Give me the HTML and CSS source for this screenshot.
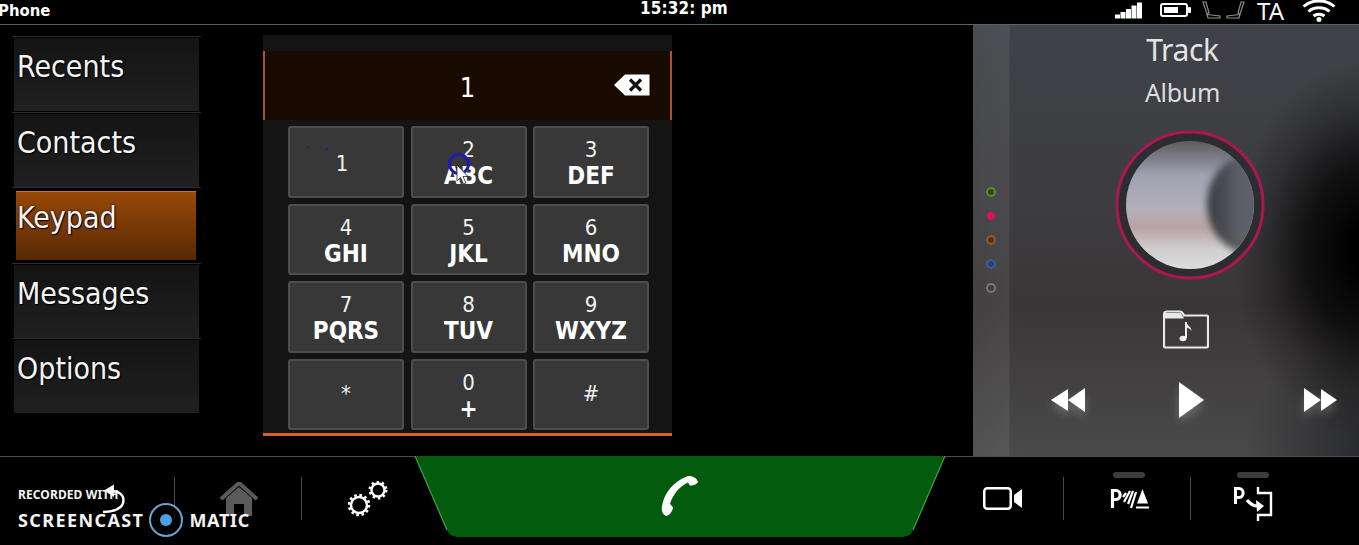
FILE: index.html
```html
<!DOCTYPE html>
<html lang="en">
<head>
<meta charset="utf-8">
<title>Phone</title>
<link rel="stylesheet" href="styles.css">
</head>
<body>
<div class="screen">
  <header class="topbar">
    <div class="app-name">Phone</div>
    <div class="clock">15:32: pm</div>
    <div class="status">
      <svg class="i-signal" width="27" height="17" viewBox="0 0 27 17"><g fill="#fff"><rect x="0" y="12.500" width="5" height="4"/><rect x="5.500" y="10" width="5" height="6.500"/><rect x="11" y="7" width="5" height="9.500"/><rect x="16.500" y="3.500" width="5" height="13"/><rect x="22" y="0.500" width="5" height="16"/></g></svg>
      <svg class="i-batt" width="31" height="14" viewBox="0 0 31 14"><rect x="1" y="1" width="26" height="12" rx="2" fill="none" stroke="#fff" stroke-width="2"/><rect x="4" y="4" width="14" height="6" fill="#fff"/><rect x="28" y="4" width="3" height="6" rx="1" fill="#fff"/></svg>
      <svg class="i-seats" width="43" height="18" viewBox="0 0 43 18"><g fill="none" stroke="#8d8d85" stroke-width="1.200"><path d="M1 1l3 0 3 11 -2 1z"/><path d="M5 13.500l13 1.500 0 2 -12 0z"/><path d="M42 1l-3 0 -3 11 2 1z"/><path d="M38 13.500l-13 1.500 0 2 12 0z"/></g></svg>
      <span class="ta">TA</span>
      <svg class="i-wifi" width="34" height="22" viewBox="0 0 34 22"><g fill="none" stroke="#fff" stroke-width="3"><path d="M1.500 6.500C10 -1 24 -1 32.500 6.500"/><path d="M6.500 11.500C12 6.500 22 6.500 27.500 11.500"/><path d="M11.500 16C14.500 13.500 19.500 13.500 22.500 16"/></g><circle cx="17" cy="19.500" r="2.500" fill="#fff"/></svg>
    </div>
  </header>

  <main class="main">
    <nav class="nav">
      <div class="nav-row"><div class="nav-item">Recents</div></div>
      <div class="nav-row"><div class="nav-item">Contacts</div></div>
      <div class="nav-row"><div class="nav-item nav-active">Keypad</div></div>
      <div class="nav-row"><div class="nav-item">Messages</div></div>
      <div class="nav-row"><div class="nav-item">Options</div></div>
    </nav>

    <section class="dialer">
      <div class="display">
        <span class="number">1</span>
        <svg class="i-del" width="36" height="22" viewBox="0 0 36 22"><path d="M0 11L11 0.500H35.500V21.500H11Z" fill="#fff"/><path d="M16 5.500L27 16.500M27 5.500L16 16.500" stroke="#111" stroke-width="3.200" fill="none"/></svg>
      </div>
      <div class="keys">
        <div class="key key-single key-one"><span class="digit">1</span><i class="spot spot-a"></i><i class="spot spot-b"></i></div>
        <div class="key"><span class="digit">2</span><span class="letters">ABC</span>
          <svg class="pointer" width="24" height="34" viewBox="0 0 24 34"><circle cx="11" cy="11" r="9.500" fill="none" stroke="#1c1cb4" stroke-width="3"/><path d="M9 12V28L12.500 24.500L15.500 31L18 30L15 23.500H20Z" fill="#fff" stroke="#222" stroke-width="0.800"/></svg>
        </div>
        <div class="key"><span class="digit">3</span><span class="letters">DEF</span></div>
        <div class="key"><span class="digit">4</span><span class="letters">GHI</span></div>
        <div class="key"><span class="digit">5</span><span class="letters">JKL</span></div>
        <div class="key"><span class="digit">6</span><span class="letters">MNO</span></div>
        <div class="key"><span class="digit">7</span><span class="letters">PQRS</span></div>
        <div class="key"><span class="digit">8</span><span class="letters">TUV</span></div>
        <div class="key"><span class="digit">9</span><span class="letters">WXYZ</span></div>
        <div class="key key-single"><span class="digit">*</span></div>
        <div class="key"><span class="digit">0</span><span class="letters">+</span></div>
        <div class="key key-single"><span class="digit">#</span></div>
      </div>
    </section>

    <aside class="media">
      <div class="sources">
        <i class="src src-green"></i>
        <i class="src src-red"></i>
        <i class="src src-orange"></i>
        <i class="src src-blue"></i>
        <i class="src src-grey"></i>
      </div>
      <div class="track">Track</div>
      <div class="album">Album</div>
      <svg class="art" width="152" height="152" viewBox="0 0 152 152">
        <defs>
          <clipPath id="artclip"><circle cx="75" cy="75" r="64"/></clipPath>
          <linearGradient id="artbg" x1="0" y1="0" x2="0" y2="1">
            <stop offset="0.08" stop-color="#5f5d63"/>
            <stop offset="0.3" stop-color="#a0a2b3"/>
            <stop offset="0.52" stop-color="#b2b0b8"/>
            <stop offset="0.64" stop-color="#b9a3a4"/>
            <stop offset="0.78" stop-color="#cfcdce"/>
            <stop offset="0.92" stop-color="#dedede"/>
          </linearGradient>
          <linearGradient id="artshade" x1="0" y1="0" x2="1" y2="0">
            <stop offset="0" stop-color="#35383d"/>
            <stop offset="0.35" stop-color="#5a5d64"/>
            <stop offset="1" stop-color="#6a6d73"/>
          </linearGradient>
          <filter id="soft"><feGaussianBlur stdDeviation="3.500"/></filter>
        </defs>
        <circle cx="75" cy="75" r="73" fill="#2b2d31" stroke="#ad1750" stroke-width="3"/>
        <g clip-path="url(#artclip)">
          <rect width="152" height="152" fill="url(#artbg)"/>
          <ellipse cx="136" cy="74" rx="44" ry="50" fill="url(#artshade)" filter="url(#soft)"/>
        </g>
      </svg>
      <svg class="folder" width="46" height="39" viewBox="0 0 46 39"><path d="M1 5C1 2 2 1.500 4 1.500H17C19 1.500 20 3 21 5.500H44C44.500 5.500 45 6 45 7V36C45 37 44.500 37.500 43.500 37.500H2.500C1.500 37.500 1 37 1 36Z" fill="none" stroke="#e8e8e8" stroke-width="2.200"/><path d="M1 3H18L21 8.500H1Z" fill="#e8e8e8"/><path d="M23 12V28" stroke="#eee" stroke-width="2"/><ellipse cx="20" cy="28.500" rx="3.500" ry="2.700" fill="#eee"/><path d="M23 12C24.500 16 28 16 28.500 21C27 18.500 25 18 23 17Z" fill="#eee"/></svg>
      <div class="transport">
        <svg class="ctl" width="35" height="26" viewBox="0 0 35 26"><path d="M17 2V24L0 13ZM34 1V25L17 13Z" fill="#fff"/></svg>
        <svg class="ctl ctl-play" width="26" height="36" viewBox="0 0 26 36"><path d="M1 0L26 18L1 36Z" fill="#fff"/></svg>
        <svg class="ctl" width="35" height="26" viewBox="0 0 35 26"><path d="M1 1L18 13L1 25ZM18 2L34 13L18 24Z" fill="#fff"/></svg>
      </div>
    </aside>
  </main>

  <footer class="footer">
    <div class="cell cell-back">
      <svg width="23" height="30" viewBox="0 0 23 30"><path d="M9 7C17 7 21.500 11 21.500 16C21.500 23 15 27.500 1 28" fill="none" stroke="#fff" stroke-width="2.400"/><path d="M12 0.500V13L2 6.500Z" fill="#fff"/></svg>
    </div>
    <div class="cell cell-home">
      <svg width="38" height="34" viewBox="0 0 38 34"><path d="M1 17L19 1L37 17" fill="none" stroke="#5a5a5a" stroke-width="4"/><path d="M6 16L19 5L32 16V34H24V22H14V34H6Z" fill="#5a5a5a"/></svg>
    </div>
    <div class="cell cell-gears">
      <svg width="40" height="36" viewBox="0 0 40 36">
        <g fill="none" stroke="#fff">
          <circle cx="11" cy="24" r="8" stroke-width="2.400"/>
          <circle cx="11" cy="24" r="10" stroke-width="2.600" stroke-dasharray="2.600 2.640"/>
          <circle cx="30" cy="9" r="6.500" stroke-width="2.400"/>
          <circle cx="30" cy="9" r="8.300" stroke-width="2.400" stroke-dasharray="2.400 2.950"/>
        </g>
      </svg>
    </div>
    <div class="cell-call">
      <svg class="call-shape" width="532" height="82" viewBox="0 0 532 82"><path d="M1 0H531L499 74C497 79 493 81 487 81H45C39 81 35 79 33 74Z" fill="#035b0e"/><path d="M1 0L33 74M531 0L499 74" stroke="#3aa83f" stroke-width="1.200" fill="none"/></svg>
      <svg class="handset" width="38" height="42" viewBox="0 0 38 42"><path d="M26 1.500C30 0 36 3 37 7C36 9 32 11 29 10.500L27 7.500C19 11 12 19 9 29C11 31 12 32 12 33C11 37 8 41 5 41C2 40 0 36 1 31C3 18 13 6 26 1.500Z" fill="#fff"/></svg>
    </div>
    <div class="cell cell-cam">
      <svg width="40" height="23" viewBox="0 0 40 23"><rect x="1.250" y="1.250" width="26.500" height="20.500" rx="3" fill="none" stroke="#fff" stroke-width="2.500"/><path d="M39 2V21L31 15V8Z" fill="#fff"/></svg>
    </div>
    <div class="cell cell-sensor">
      <i class="pill"></i>
      <svg width="39" height="22" viewBox="0 0 39 22"><path d="M2.500 20V2.500H6C11.500 2.500 11.500 11.500 6 11.500H2.500" fill="none" stroke="#fff" stroke-width="3.200"/><g fill="none" stroke="#fff" stroke-width="2.200"><path d="M13 9L16 5"/><path d="M14 14L20 3"/><path d="M18 16L23 3"/><path d="M21 20L26 4"/></g><path d="M32.500 1L38 15.500H27Z" fill="#fff"/><path d="M26 19.500H39" stroke="#fff" stroke-width="2"/></svg>
    </div>
    <div class="cell cell-exit">
      <i class="pill"></i>
      <svg class="exit-icon" width="40" height="36" viewBox="0 0 40 36"><path d="M2.500 18V2.500H6C11.500 2.500 11.500 11.500 6 11.500H2.500" fill="none" stroke="#fff" stroke-width="3"/><path d="M25 1V7H38V29H25V35" fill="none" stroke="#fff" stroke-width="2.400"/><path d="M14 14C18 19 21 20 24 20" fill="none" stroke="#fff" stroke-width="3.200"/><path d="M23 14L31 20L24 26Z" fill="#fff"/></svg>
    </div>
  </footer>

  <div class="watermark">
    <div class="wm-top">RECORDED WITH</div>
    <div class="wm-row">
      <span>SCREENCAST</span>
      <i class="wm-logo"><i class="wm-dot"></i></i>
      <span class="wm-matic">MATIC</span>
    </div>
  </div>
</div>
</body>
</html>
```

FILE: styles.css
```css
* { box-sizing: border-box; }
html, body { margin: 0; padding: 0; background: #000; }
body { width: 1359px; height: 545px; overflow: hidden; }
i { display: block; font-style: normal; }
svg { display: block; flex: none; }

.screen {
  position: relative;
  width: 1359px;
  height: 545px;
  overflow: hidden;
  color: #fff;
  font-family: "DejaVu Sans Condensed", "DejaVu Sans", sans-serif;
  font-stretch: condensed;
}

/* top bar */
.topbar {
  display: flex;
  align-items: flex-start;
  height: 25px;
  border-bottom: 1px solid #4f6a5e;
  background: #000;
}
.app-name {
  flex: 0 0 642px;
  margin-left: -2px;
  padding-top: 1px;
  font: bold 16.500px/20px "DejaVu Sans Condensed", "DejaVu Sans", sans-serif;
}
.clock {
  font: bold 17px/17px "DejaVu Sans Condensed", "DejaVu Sans", sans-serif;
  letter-spacing: 0.100px;
}
.status {
  display: flex;
  align-items: flex-start;
  margin-left: auto;
  padding-right: 23px;
}
.i-signal { margin-top: 2px; }
.i-batt { margin: 3px 0 0 18px; }
.i-seats { margin: 1px 0 0 11px; }
.ta {
  margin-left: 12px;
  font: 24px/22px "Noto Sans", sans-serif;
  color: #f2f2f2;
}
.i-wifi { margin-left: 18px; }

/* main row */
.main {
  display: flex;
  height: 431px;
}
.nav {
  flex: 0 0 189px;
  margin: 11px 0 0 12px;
}
.nav-row {
  height: 75.500px;
  padding: 1px 2px 0;
  border-top: 1px solid #2c2c2c;
}
.nav-item {
  height: 73px;
  padding: 11px 0 0 3px;
  background: linear-gradient(#141414, #202020);
  font-size: 30px;
  line-height: 36px;
  color: #f4f4f4;
  text-shadow: 0 0 2px #000, 1px 1px 1px #000;
}
.nav-active {
  height: 69px;
  margin: 2px 3px 0 2px;
  padding: 8px 0 0 1px;
  border-top: 1px solid #c47433;
  background: linear-gradient(#984806, #582902);
}

/* dialer */
.dialer {
  flex: 0 0 409px;
  height: 401px;
  margin: 10px 0 0 62px;
  padding-top: 16px;
  border-bottom: 3px solid #e0601c;
  background: #141414;
}
.display {
  display: flex;
  align-items: center;
  justify-content: center;
  position: relative;
  height: 69px;
  border-left: 2px solid #a8552f;
  border-right: 2px solid #a8552f;
  background: #190a00;
}
.number {
  font-size: 27px;
  line-height: 30px;
  padding-top: 5px;
}
.i-del { position: absolute; right: 20px; top: 23px; }
.keys {
  display: grid;
  grid-template-columns: repeat(3, 116px);
  grid-auto-rows: 71.500px;
  gap: 6px 6.500px;
  padding: 6px 0 0 25px;
}
.key {
  position: relative;
  display: flex;
  flex-direction: column;
  align-items: center;
  padding-top: 10px;
  border: 2px solid #4e4e4e;
  border-radius: 3px;
  background: #383838;
}
.key-single { justify-content: center; padding-top: 0; }
.key-one { padding: 4px 8px 0 0; }
.digit { font-size: 22px; line-height: 25px; color: #f2f2f2; margin-top: -1px; }
.letters { font-size: 24px; line-height: 28px; font-weight: bold; color: #fff; }
.spot { position: absolute; width: 3px; height: 3px; border-radius: 50%; background: #20208c; }
.spot-a { left: 17px; top: 18px; width: 2px; height: 2px; }
.spot-b { left: 35px; top: 19px; }
.pointer { position: absolute; left: 35px; top: 25px; }

/* media panel */
.media {
  position: relative;
  flex: 0 0 386px;
  margin-left: 301px;
  padding: 5px 0 0 37px;
  display: flex;
  flex-direction: column;
  align-items: center;
  background:
    linear-gradient(90deg, rgba(255,255,255,.05) 0, rgba(255,255,255,.07) 36px, transparent 37px),
    radial-gradient(ellipse 135px 190px at 395px 225px, #000 12%, rgba(0,0,0,.72) 45%, rgba(0,0,0,.25) 75%, transparent 100%),
    radial-gradient(ellipse 130px 120px at 400px 430px, rgba(25,27,32,.75) 0, transparent 100%),
    linear-gradient(#404248, #3d3d40 40%, #3a3637 65%, #4a4a4a 100%);
}
.sources {
  position: absolute;
  left: 13px;
  top: 162px;
  display: flex;
  flex-direction: column;
  gap: 14px;
}
.src { width: 10px; height: 10px; border-radius: 50%; border: 2px solid; background: #333; }
.src-green { border-color: #5f8a3a; background: #2f4a22; }
.src-red { border-color: #e0105a; background: #e0105a; transform: scale(.8); }
.src-orange { border-color: #8e5a32; background: #50321f; }
.src-blue { border-color: #3d5c94; background: #2a3f66; }
.src-grey { border-color: #77777a; background: #3c3c3e; }
.track {
  margin: 0 4px 0 0;
  font: 30px/40px "Noto Sans", sans-serif;
  letter-spacing: -0.300px;
  color: #e4e4e6;
}
.album {
  margin: 2px 4px 0 0;
  font: 25px/40px "Noto Sans", sans-serif;
  letter-spacing: -0.300px;
  color: #dcdcde;
}
.art { margin: 18px 0 0 13px; }
.folder { margin: 28px 0 0 2px; }
.transport {
  display: flex;
  align-items: center;
  justify-content: space-between;
  align-self: stretch;
  margin-top: 33px;
  padding: 0 21px 0 41px;
}
.ctl { filter: drop-shadow(0 5px 5px rgba(255,255,255,.22)); }
.ctl-play { margin-right: 8px; }

/* footer */
.footer {
  display: grid;
  grid-template-columns: 175px 127px 113px 530px 119px 127px 168px;
  height: 89px;
  border-top: 1px solid #4c4c4c;
}
.cell {
  position: relative;
  display: flex;
  align-items: center;
  justify-content: center;
  height: 43px;
  margin-top: 20px;
}
.cell-back, .cell-home, .cell-cam, .cell-sensor { border-right: 1px solid #4b4b4b; }
.cell-back { justify-content: flex-end; padding-right: 49px; }
.cell-home { padding-left: 2px; }
.cell-gears { justify-content: flex-start; padding-left: 46px; }
.cell-call { position: relative; height: 82px; margin: -1px 0 0 -1px; }
.handset { position: absolute; left: 247px; top: 19px; }
.cell-cam { justify-content: flex-start; padding-left: 38px; }
.cell-sensor { justify-content: flex-start; padding-left: 46px; }
.cell-exit { justify-content: flex-start; padding-left: 42px; }
.exit-icon { margin-top: 10px; }
.pill {
  position: absolute;
  top: -5px;
  width: 32px;
  height: 6px;
  border-radius: 3px;
  background: #3c3c3c;
}
.cell-sensor .pill { left: 49px; }
.cell-exit .pill { left: 46px; }

/* recorder watermark */
.watermark {
  position: absolute;
  left: 18px;
  top: 487px;
  font-family: "Noto Sans", sans-serif;
  font-weight: bold;
  color: #f4f4f4;
}
.wm-top { font-size: 12px; line-height: 16px; letter-spacing: 0.100px; }
.wm-row {
  display: flex;
  align-items: center;
  font-size: 18px;
  letter-spacing: 1.400px;
  line-height: 34px;
}
.wm-logo {
  display: flex;
  align-items: center;
  justify-content: center;
  width: 34px;
  height: 34px;
  margin: 0 6px 0 5px;
  border: 2px solid #6aa4cc;
  border-radius: 50%;
  background: rgba(0,0,0,.75);
}
.wm-dot { width: 12px; height: 12px; border-radius: 50%; background: #4f9fe6; }
.wm-matic { letter-spacing: 0.700px; }
```
